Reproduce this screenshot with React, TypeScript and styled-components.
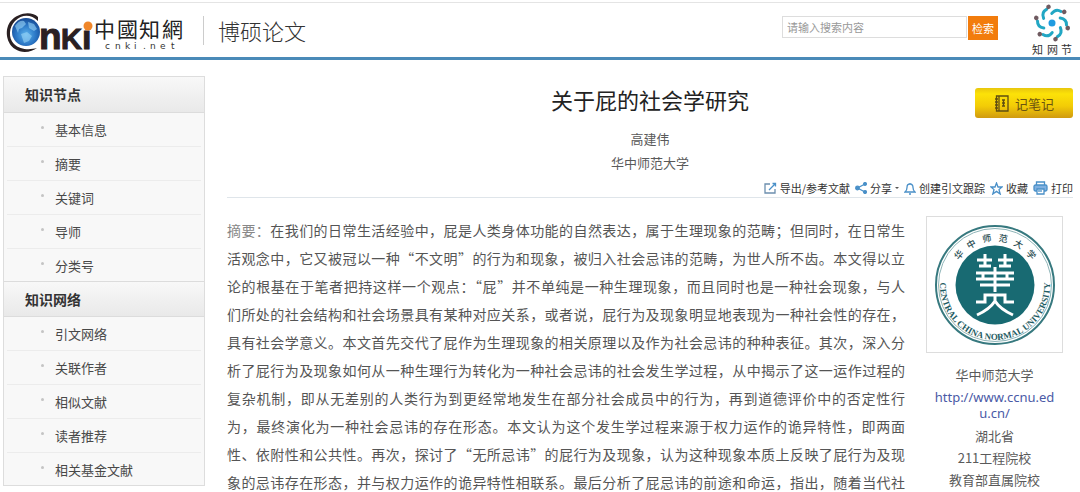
import React from "react";
import styled, { createGlobalStyle } from "styled-components";

const GlobalStyle = createGlobalStyle`
  * { box-sizing: border-box; }
  html { scrollbar-width: none; }
  body {
    margin: 0;
    background: #fff;
    color: #5a5a5a;
    font-family: "Noto Sans CJK SC", "Noto Sans", sans-serif;
    font-size: 13px;
  }
  h1, h2, p, ul { margin: 0; padding: 0; }
  ul { list-style: none; }
  a { color: inherit; text-decoration: none; }
  button, input { font-family: inherit; }
`;

const Header = styled.header`
  display: flex;
  align-items: flex-start;
  min-height: 58px;
  margin-top: 2px;
  padding: 0 6px 0 4px;
  border-top: 1px solid #e4e4e4;
  border-bottom: 3px solid #4a8ab8;
`;

const LogoLink = styled.a`
  display: block;
  line-height: 0;
  svg { overflow: visible; }
`;

const SiteTitle = styled.div`
  margin: 13px 0 0 15px;
  padding-left: 14px;
  border-left: 1px solid #ccc;
  color: #333;
  font-size: 22px;
  font-weight: 300;
  line-height: 29px;
`;

const SearchForm = styled.form`
  display: flex;
  gap: 1px;
  margin: 13px 32px 0 auto;
`;

const SearchInput = styled.input`
  width: 185px;
  height: 22px;
  padding: 0 4px;
  border: 1px solid #ddd;
  border-radius: 0;
  background: #fff;
  color: #555;
  font-size: 11px;
  outline: none;
  &::placeholder { color: #999; opacity: 1; }
`;

const SearchButton = styled.button`
  width: 30px;
  height: 24px;
  padding: 0;
  border: 0;
  background: #f27c0c;
  color: #fff;
  font-size: 11px;
  line-height: 24px;
`;

const Page = styled.div`
  display: flex;
  align-items: flex-start;
  padding: 16px 7px 0 3px;
`;

const Sidebar = styled.nav`
  flex: 0 0 202px;
  border: 1px solid #ddd;
  background: #f8f8f8;
`;

const SidebarHeading = styled.h2`
  height: 36px;
  padding-left: 21px;
  border-bottom: 1px solid #dcdcdc;
  background: linear-gradient(#f8f8f8, #e9e9e9);
  color: #333;
  font-size: 14px;
  font-weight: 700;
  line-height: 34px;
`;

const SidebarList = styled.ul`
  & + ${SidebarHeading} { border-top: 1px solid #dcdcdc; }
`;

const SidebarItem = styled.li`
  display: flex;
  align-items: center;
  height: 34px;
  margin: 0 3px;
  padding-left: 34px;
  border-bottom: 1px solid #ececec;
  color: #484848;
  &:last-child { height: 32px; border-bottom: 0; }
  &::before {
    content: "";
    width: 3px;
    height: 3px;
    margin: 0 11px 4px 0;
    border-radius: 50%;
    background: #c4c4c4;
  }
`;

const Main = styled.main`
  flex: 1;
  min-width: 0;
  padding-left: 22px;
`;

const TitleRow = styled.div`
  display: grid;
  grid-template-columns: 98px 1fr 98px;
  align-items: start;
  padding-top: 8px;
  text-align: center;
`;

const TitleBlock = styled.div`
  grid-column: 2;
`;

const PaperTitle = styled.h1`
  margin-bottom: 13px;
  color: #222;
  font-size: 22px;
  font-weight: 400;
  line-height: 30px;
`;

const Byline = styled.p`
  line-height: 24px;
`;

const NoteButton = styled.button`
  display: flex;
  align-items: center;
  justify-content: center;
  gap: 6px;
  height: 30px;
  margin-top: 4px;
  padding: 0;
  border: 0;
  border-radius: 3px;
  background: linear-gradient(#e8c60c, #fce208 20%, #f3cc06 60%, #d09a10);
  color: #6b5410;
  font-size: 13px;
`;

const Toolbar = styled.div`
  display: flex;
  align-items: flex-end;
  justify-content: flex-end;
  gap: 5px;
  height: 23px;
  border-bottom: 1px solid #dfe5ea;
`;

const Tool = styled.button`
  display: flex;
  align-items: center;
  gap: 3px;
  height: 18px;
  padding: 0;
  border: 0;
  background: none;
  color: #333;
  font-size: 11px;
  white-space: nowrap;
`;

const Caret = styled.span`
  width: 0;
  border: 2px solid transparent;
  border-top-color: #555;
  border-bottom: 0;
`;

const Article = styled.div`
  display: flex;
  align-items: flex-start;
  gap: 21px;
  padding: 18px 10px 0 0;
`;

const Abstract = styled.p`
  flex: 1;
  min-width: 0;
  color: #555;
  font-size: 14px;
  line-height: 28px;
  text-align: justify;
  text-align-last: justify;
`;

const Label = styled.span`
  color: #888;
`;

const School = styled.aside`
  flex: 0 0 137px;
  line-height: 22px;
  text-align: center;
`;

const EmblemFrame = styled.div`
  display: flex;
  justify-content: center;
  align-items: center;
  height: 137px;
  margin-bottom: 11px;
  border: 1px solid #ddd;
`;

const SchoolLink = styled.a`
  display: block;
  margin: 3px 8px 4px;
  color: #4a5aa6;
  font-family: "Noto Sans", sans-serif;
  line-height: 16px;
  word-break: break-all;
`;

const CnkiLogo = () => (
  <svg width="184" height="52" viewBox="4 3 184 52" role="img" aria-label="中国知网 cnki.net">
    <defs>
      <radialGradient id="globe" cx="50%" cy="60%" r="60%">
        <stop offset="0" stopColor="#5cb4ee" />
        <stop offset="0.6" stopColor="#2a75c4" />
        <stop offset="1" stopColor="#164a94" />
      </radialGradient>
    </defs>
    <path d="M38 17 C32 11 18 12 10 22 C4 31 7 44 15 49 C22 54 32 52 37 48 C30 50 20 50 14 44 C8 38 9 27 15 21 C22 14 31 14 38 21 Z" fill="#2a2022" />
    <circle cx="26" cy="32" r="14" fill="url(#globe)" />
    <path d="M15 26 q4 -6 9 -5 l2 3 -4 4 -3 1 -1 4 z M28 22 l6 2 3 5 -3 2 -5 -3 z M21 34 l6 -2 5 4 -3 5 -5 2 z" fill="#9bd6f7" opacity="0.6" />
    <text y="49" fill="#2a2022" stroke="#2a2022" strokeWidth="1" fontFamily='"Liberation Sans", sans-serif' fontWeight="700">
      <tspan x="39" fontSize="37">n</tspan>
      <tspan x="61" fontSize="29">K</tspan>
      <tspan x="82" fontSize="34">ı</tspan>
    </text>
    <circle cx="88" cy="26" r="4.500" fill="#f0872a" />
    <text x="94 117 139 162" y="37" fill="#222" fontFamily='"Noto Sans CJK TC", sans-serif' fontSize="21">中國知網</text>
    <text x="105 115 125 134 143 150 160 171" y="49" fill="#333" fontFamily='"DejaVu Sans", sans-serif' fontSize="9">cnki.net</text>
  </svg>
);

const KnotLogo = () => (
  <svg width="44" height="53" viewBox="1030 3 44 53" role="img" aria-label="知网节">
    <g transform="translate(1052 23)">
      <circle r="3.5" fill="#1f9be0" />
      {[0, 60, 120, 180, 240, 300].map((a) => (
        <g key={a} transform={`rotate(${a - 14})`}>
          <path d="M-7 -6.5 Q-8 -13 -2 -14.5" fill="none" stroke="#22a7c4" strokeWidth="3" strokeLinecap="round" />
          <circle cx="0.5" cy="-16.500" r="2.300" fill="#6f5a60" />
        </g>
      ))}
    </g>
    <text x="1032 1047 1061" y="54" fill="#333" fontSize="11" fontFamily='"Noto Sans CJK SC", sans-serif'>知网节</text>
  </svg>
);

const Emblem = () => (
  <svg width="122" height="122" viewBox="-61 -61 122 122" role="img" aria-label="华中师范大学校徽">
    <defs>
      <path id="ringBottom" d="M-52 -18 A55 55 0 1 0 52 -18" />
    </defs>
    <circle r="59" fill="#fff" stroke="#37797f" strokeWidth="2" />
    <circle r="56.5" fill="none" stroke="#8fb5b8" strokeWidth="1" />
    <circle r="39.5" fill="#186a72" />
    <g fill="#2c4f54" fontSize="9" fontWeight="500" fontFamily='"Noto Sans CJK SC", sans-serif' textAnchor="middle">
      {["华", "中", "师", "范", "大", "学"].map((c, i) => (
        <text key={c} y="-44" transform={`rotate(${-50 + i * 20})`}>{c}</text>
      ))}
    </g>
    <text fill="#1f5c63" fontSize="9" fontWeight="700" fontFamily='"Liberation Serif", serif'>
      <textPath href="#ringBottom" startOffset="50%" textAnchor="middle">CENTRAL CHINA NORMAL UNIVERSITY</textPath>
    </text>
    <g fill="none" stroke="#fff" strokeWidth="3">
      <path d="M-18 -25 H-3 M3 -25 H18 M-10 -31 V-18 M10 -31 V-18 M-16 -19 H-4 M4 -19 H16 M-19 -12 H19 M-12 -12 V-6 M12 -12 V-6 M-19 -6 H19 M-15 0 H15 M0 -18 V7" />
      <path d="M-19 17 H-10 V10 H10 V17 H19 M0 10 V16 Q-5 24 -18 30 M0 16 Q5 24 18 30" />
    </g>
  </svg>
);

const iconProps = { fill: "none", stroke: "#4a90c8", strokeWidth: 1.3 };

const ExportIcon = () => (
  <svg width="13" height="12" viewBox="0 0 13 12" {...iconProps}>
    <path d="M6 2 H1 V11 H11 V7" stroke="#6c8fae" />
    <path d="M5 8 L11.500 1.500 M8.500 1.500 H11.500 V4.500" />
  </svg>
);
const ShareIcon = () => (
  <svg width="12" height="12" viewBox="0 0 12 12" {...iconProps} fill="#4a90c8">
    <path d="M10 2 L2.5 6 L10 10" fill="none" />
    <circle cx="10" cy="2" r="1.4" />
    <circle cx="2.5" cy="6" r="1.8" />
    <circle cx="10" cy="10" r="1.4" />
  </svg>
);
const BellIcon = () => (
  <svg width="12" height="13" viewBox="0 0 12 13" {...iconProps}>
    <path d="M6 1 V2 M1 10 H11 Q9 8.500 9 5.500 Q9 2 6 2 Q3 2 3 5.500 Q3 8.500 1 10 Z M5 12 H7" />
  </svg>
);
const StarIcon = () => (
  <svg width="13" height="13" viewBox="0 0 13 13" {...iconProps}>
    <path d="M6.500 1 L8 5 H12 L9 7.600 L10.200 12 L6.500 9.400 L2.800 12 L4 7.600 L1 5 H5 Z" />
  </svg>
);
const PrintIcon = () => (
  <svg width="15" height="14" viewBox="0 0 15 14" {...iconProps}>
    <path d="M3.500 4 V1 H11.500 V4" />
    <rect x="1" y="4" width="13" height="6" rx="1.500" fill="#7fb0e0" />
    <path d="M4 8 H11 V13 H4 Z" fill="#fff" />
    <path d="M5 10 H9" />
  </svg>
);
const NotebookIcon = () => (
  <svg width="15" height="17" viewBox="0 0 15 17" fill="none" stroke="#5f4d12" strokeWidth="1.3">
    <path d="M2.500 1 H14 V16 H2.500 Z M5 1 V16 M1 4 H4 M1 7 H4 M1 10 H4 M1 13 H4 M8 5 H11 M8 8 H11 M8 11 H11 M9.500 5 V11" />
  </svg>
);

const sections = [
  { title: "知识节点", items: ["基本信息", "摘要", "关键词", "导师", "分类号"] },
  { title: "知识网络", items: ["引文网络", "关联作者", "相似文献", "读者推荐", "相关基金文献"] },
];

const abstractLines = [
  "在我们的日常生活经验中，屁是人类身体功能的自然表达，属于生理现象的范畴；但同时，在日常生",
  "活观念中，它又被冠以一种“不文明”的行为和现象，被归入社会忌讳的范畴，为世人所不齿。本文得以立",
  "论的根基在于笔者把持这样一个观点：“屁”并不单纯是一种生理现象，而且同时也是一种社会现象，与人",
  "们所处的社会结构和社会场景具有某种对应关系，或者说，屁行为及现象明显地表现为一种社会性的存在，",
  "具有社会学意义。本文首先交代了屁作为生理现象的相关原理以及作为社会忌讳的种种表征。其次，深入分",
  "析了屁行为及现象如何从一种生理行为转化为一种社会忌讳的社会发生学过程，从中揭示了这一运作过程的",
  "复杂机制，即从无差别的人类行为到更经常地发生在部分社会成员中的行为，再到道德评价中的否定性行",
  "为，最终演化为一种社会忌讳的存在形态。本文认为这个发生学过程来源于权力运作的诡异特性，即两面",
  "性、依附性和公共性。再次，探讨了“无所忌讳”的屁行为及现象，认为这种现象本质上反映了屁行为及现",
  "象的忌讳存在形态，并与权力运作的诡异特性相联系。最后分析了屁忌讳的前途和命运，指出，随着当代社",
];

export default function App() {
  return (
    <div lang="zh-CN">
      <GlobalStyle />
      <Header>
        <LogoLink href="#"><CnkiLogo /></LogoLink>
        <SiteTitle>博硕论文</SiteTitle>
        <SearchForm onSubmit={(e) => e.preventDefault()}>
          <SearchInput type="text" aria-label="检索" placeholder="请输入搜索内容" />
          <SearchButton type="submit">检索</SearchButton>
        </SearchForm>
        <LogoLink href="#"><KnotLogo /></LogoLink>
      </Header>
      <Page>
        <Sidebar>
          {sections.map((s) => (
            <React.Fragment key={s.title}>
              <SidebarHeading>{s.title}</SidebarHeading>
              <SidebarList>
                {s.items.map((item) => (
                  <SidebarItem key={item}><a href="#">{item}</a></SidebarItem>
                ))}
              </SidebarList>
            </React.Fragment>
          ))}
        </Sidebar>
        <Main>
          <TitleRow>
            <TitleBlock>
              <PaperTitle>关于屁的社会学研究</PaperTitle>
              <Byline>高建伟</Byline>
              <Byline>华中师范大学</Byline>
            </TitleBlock>
            <NoteButton type="button"><NotebookIcon />记笔记</NoteButton>
          </TitleRow>
          <Toolbar>
            <Tool type="button"><ExportIcon />导出/参考文献</Tool>
            <Tool type="button"><ShareIcon />分享<Caret /></Tool>
            <Tool type="button"><BellIcon />创建引文跟踪</Tool>
            <Tool type="button"><StarIcon />收藏</Tool>
            <Tool type="button"><PrintIcon />打印</Tool>
          </Toolbar>
          <Article>
            <Abstract>
              <Label>摘要：</Label>
              {abstractLines.map((line, i) => (
                <React.Fragment key={line}>
                  {i > 0 && <br />}
                  {line}
                </React.Fragment>
              ))}
            </Abstract>
            <School>
              <EmblemFrame><Emblem /></EmblemFrame>
              <p>华中师范大学</p>
              <SchoolLink href="#">http://www.ccnu.edu.cn/</SchoolLink>
              <p>湖北省</p>
              <p>211工程院校</p>
              <p>教育部直属院校</p>
            </School>
          </Article>
        </Main>
      </Page>
    </div>
  );
}
